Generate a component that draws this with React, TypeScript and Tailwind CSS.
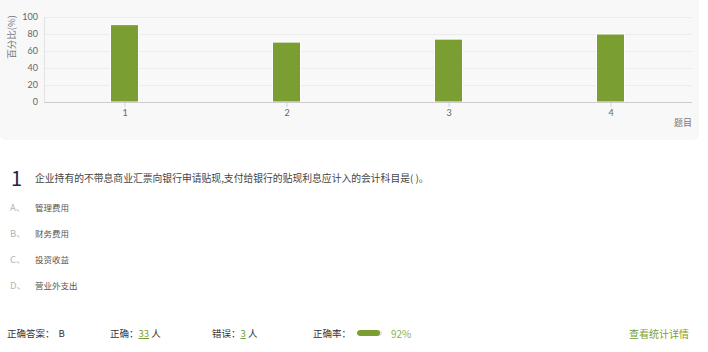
import React from "react";

const bars = [
  { label: "1", value: 91 },
  { label: "2", value: 70.5 },
  { label: "3", value: 74 },
  { label: "4", value: 80 },
];

const options = [
  { key: "A", text: "管理费用" },
  { key: "B", text: "财务费用" },
  { key: "C", text: "投资收益" },
  { key: "D", text: "营业外支出" },
];

const cjk = { fontFamily: '"Noto Sans CJK SC", "Noto Sans", sans-serif' };

function Chart() {
  const left = 44;
  const right = 692;
  const top = 17;
  const bottom = 102;
  const step = (right - left) / bars.length;
  const scale = (bottom - top) / 100;

  return (
    <svg width="699" height="140" viewBox="0 0 699 140" className="block">
      {[0, 20, 40, 60, 80, 100].map((v) => {
        const y = bottom - v * scale;
        return (
          <g key={v}>
            {v > 0 && <line x1={left} x2={right} y1={y + 0.5} y2={y + 0.5} stroke="#ececec" />}
            <text x={38} y={y + 3} textAnchor="end" fontSize="9" fill="#666" fontFamily="Lato, sans-serif">
              {v}
            </text>
          </g>
        );
      })}
      <line x1={left + 0.5} x2={left + 0.5} y1={top} y2={bottom} stroke="#e2e2e2" />
      <text
        transform="translate(15 37) rotate(-90)"
        textAnchor="middle"
        fontSize="9.5"
        fill="#6f7785"
        style={cjk}
      >
        百分比(%)
      </text>
      {bars.map((b, i) => {
        const cx = left + step * i + step / 2;
        const h = b.value * scale;
        return (
          <g key={b.label}>
            <rect x={cx - 14.5} y={bottom - h} width={28} height={h} fill="#7a9e31" stroke="#ffffff" strokeWidth="1" />
            <line x1={cx} x2={cx} y1={bottom} y2={bottom + 5} stroke="#ccd6eb" />
            <text x={cx} y={116} textAnchor="middle" fontSize="9" fill="#666" fontFamily="Lato, sans-serif">
              {b.label}
            </text>
          </g>
        );
      })}
      <line x1={left} x2={right} y1={bottom + 0.5} y2={bottom + 0.5} stroke="#cccccc" />
      <text x={692} y={126} textAnchor="end" fontSize="9" fill="#777" style={cjk}>
        题目
      </text>
    </svg>
  );
}

export default function App() {
  return (
    <div className="w-[708px] h-[352px] bg-white overflow-hidden" style={cjk}>
      <div className="w-[699px] h-[140px] bg-[#f8f8f8] rounded-b-[5px]">
        <Chart />
      </div>

      <div className="mt-[28px] flex items-center h-[20px]">
        <span className="w-[35px] pl-[11px] text-[20px] leading-none text-[#1c2747]">1</span>
        <span className="text-[9.8px] text-[#444]">
          企业持有的不带息商业汇票向银行申请贴现,支付给银行的贴现利息应计入的会计科目是( )。
        </span>
      </div>

      <div className="mt-[6px]">
        {options.map((o) => (
          <div key={o.key} className="flex items-center h-[26px]">
            <span className="w-[35px] pl-[10px] text-[9.5px] text-[#b5b5b5]">{o.key}、</span>
            <span className="text-[8.5px] text-[#555]">{o.text}</span>
          </div>
        ))}
      </div>

      <div className="mt-[25px] flex items-center h-[20px] pl-[7px] pr-[19px] text-[9.5px] text-[#333]">
        <div className="w-[103px]">
          正确答案：<span className="ml-[4px]">B</span>
        </div>
        <div className="w-[102px]">
          正确：<span className="text-[#7a9e31] underline">33</span> 人
        </div>
        <div className="w-[101px]">
          错误：<span className="text-[#7a9e31] underline">3</span> 人
        </div>
        <div className="flex items-center">
          正确率：
          <div className="ml-[6px] w-[25px] h-[6px] rounded-full bg-[#e4e4e4] overflow-hidden">
            <div className="h-full rounded-full bg-[#7a9e31]" style={{ width: "92%" }} />
          </div>
          <span className="ml-[9px] text-[#8fb04a] text-[10px]">92%</span>
        </div>
        <a className="ml-auto text-[#7a9e31] text-[10px]">查看统计详情</a>
      </div>
    </div>
  );
}
